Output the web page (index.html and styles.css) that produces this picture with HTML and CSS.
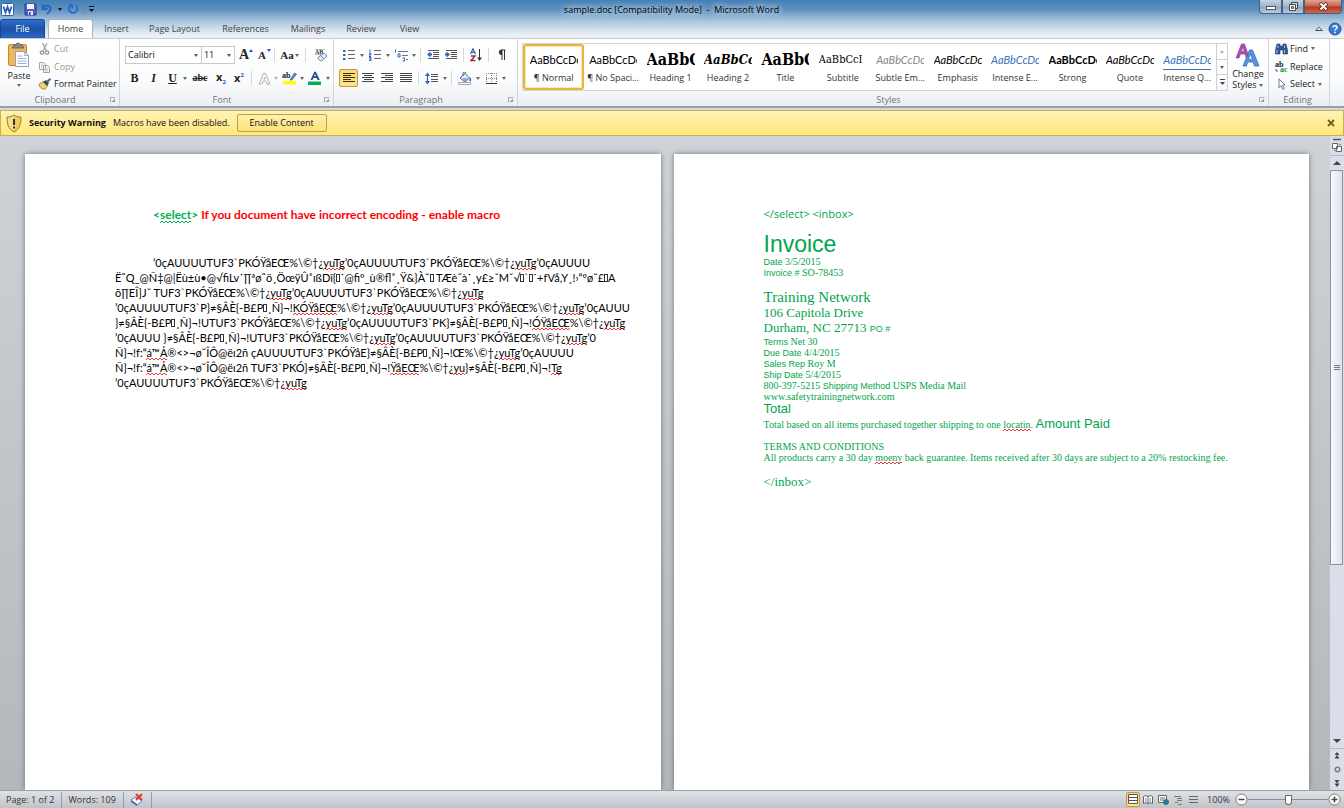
FILE: index.html
```html
<!DOCTYPE html>
<html lang="en">
<head>
<meta charset="utf-8">
<title>sample.doc [Compatibility Mode] - Microsoft Word</title>
<link rel="stylesheet" href="styles.css">
</head>
<body>
<header class="frame">
  <div class="titlebar">
    <div class="quick">
      <svg width="14" height="14" viewBox="0 0 14 14"><rect x=".5" y="1.500" width="12" height="12" rx="1" fill="#fff" stroke="#2b63a8"/><path d="M2.500 4.500l2 6 2-5.500 2 5.500 2-6" fill="none" stroke="#2560b4" stroke-width="1.800"/></svg>
      <i class="qsep"></i>
      <button aria-label="Save"><svg width="13" height="13" viewBox="0 0 13 13"><path d="M1 1h10l1 1v10H1z" fill="#5a5ec4" stroke="#303590"/><path d="M3 1h7v5H3z" fill="#f4f6ff"/><path d="M4 8h5v4H4z" fill="#dfe2f4"/><path d="M5 9h1.500v3H5z" fill="#30358f"/></svg></button>
      <button aria-label="Undo"><svg width="12" height="12" viewBox="0 0 12 12"><path d="M1.500 1v5h5" fill="none" stroke="#2a62c6" stroke-width="1.800"/><path d="M2 5.500C4 1.500 10 2 9.500 6c-.3 2-1.500 3.500-3.500 5" fill="none" stroke="#2a62c6" stroke-width="2"/></svg></button>
      <i class="caret dark"></i>
      <button aria-label="Repeat"><svg width="12" height="12" viewBox="0 0 12 12"><path d="M9 2.500A4.200 4.200 0 1 1 3 3" fill="none" stroke="#2a6ad0" stroke-width="2"/><path d="M1 1h5v5z" fill="#2a6ad0"/></svg></button>
      <i class="qsep"></i>
      <button aria-label="Customize"><svg width="7" height="8" viewBox="0 0 7 8"><path d="M1 1.500h5" stroke="#111"/><path d="M1 4h5L3.500 7z" fill="#111"/></svg></button>
    </div>
    <h1 class="title">sample.doc [Compatibility Mode]&nbsp; -&nbsp; Microsoft Word</h1>
    <div class="winbtns">
      <button aria-label="Minimize"><svg width="12" height="8" viewBox="0 0 12 8"><rect x="1.500" y="3.500" width="9" height="3" fill="#fff" stroke="#555"/></svg></button>
      <button aria-label="Restore"><svg width="11" height="11" viewBox="0 0 11 11"><path d="M3.500 1.500h6v6h-6z" fill="#ddd" stroke="#444"/><path d="M1.500 3.500h6v6h-6z" fill="#fff" stroke="#444"/><path d="M3.500 5.500h2v2h-2z" fill="#aaa" stroke="#444" stroke-width=".8"/></svg></button>
      <button class="close" aria-label="Close"><svg width="11" height="9" viewBox="0 0 11 9"><path d="M2 1l7 7M9 1L2 8" stroke="#5a2a26" stroke-width="3.400"/><path d="M2.500 1.500l6 6M8.500 1.500l-6 6" stroke="#fff" stroke-width="2"/></svg></button>
    </div>
  </div>
  <nav class="tabs">
    <button class="file">File</button>
    <button class="tab active">Home</button>
    <button class="tab">Insert</button>
    <button class="tab w-l">Page Layout</button>
    <button class="tab w-l">References</button>
    <button class="tab w-m">Mailings</button>
    <button class="tab w-s">Review</button>
    <button class="tab">View</button>
    <span class="grow"></span>
    <button class="mini" aria-label="Minimize the Ribbon"><svg width="8" height="6" viewBox="0 0 8 6"><path d="M.8 4.500L4 1.200l3.200 3.300z" fill="#fff" stroke="#444"/></svg></button>
    <button class="mini" aria-label="Help"><svg width="14" height="14" viewBox="0 0 14 14"><circle cx="7" cy="7" r="6" fill="#3a78d0" stroke="#2556a4"/><path d="M5 5.500c0-2.500 4-2.500 4 0 0 1.500-2 1.500-2 3M7 9.800v1.500" fill="none" stroke="#fff" stroke-width="1.500"/></svg></button>
  </nav>
</header>

<section class="ribbon">
  <div class="group clip">
    <div class="body clipbody">
      <button class="paste"><svg width="24" height="26" viewBox="0 0 24 26"><rect x="1.500" y="2.500" width="18" height="21" rx="1.500" fill="#f0b858" stroke="#c8872e"/><path d="M5 6l2-3h2a2 2 0 0 1 4 0h2l2 3z" fill="#8d8d8d" stroke="#555" stroke-width=".8"/><path d="M8.500 9.500h9l4 4v11h-13z" fill="#fff" stroke="#8ea2c0"/><path d="M17.500 9.500v4h4M10.500 14h5M10.500 16.500h9M10.500 19h9M10.500 21.500h9" fill="none" stroke="#9db2d2"/></svg><span>Paste</span><i class="caret"></i></button>
      <div class="cliplist">
        <button class="off"><svg width="14" height="12" viewBox="0 0 14 12"><path d="M4.500 0l4 8M9 0L5 8" stroke="#a5a5a5" stroke-width="1.300"/><circle cx="4" cy="9.500" r="1.700" fill="none" stroke="#999" stroke-width="1.300"/><circle cx="9" cy="9.500" r="1.700" fill="none" stroke="#999" stroke-width="1.300"/></svg>Cut</button>
        <button class="off"><svg width="14" height="12" viewBox="0 0 14 12"><path d="M1.500 1.500h4l2 2v5h-6zM5.500 4.500h4l2 2v5h-6z" fill="#f3f3f3" stroke="#a5a5a5"/><path d="M7 8h3M7 9.700h3M3 4h2M3 6h2" stroke="#bbb" stroke-width=".8"/></svg>Copy</button>
        <button><svg width="14" height="12" viewBox="0 0 14 12"><path d="M1 6l5-3 4 4-3 4.500-2-1-1 .5-1-2-1.500-.5z" fill="#f0d070" stroke="#96731c" stroke-width=".7"/><path d="M5 4l3-2 3 3-2 3z" fill="#454545"/><path d="M9 4l3.500-3.300" stroke="#4a67b4" stroke-width="2"/></svg>Format Painter</button>
      </div>
    </div>
    <footer class="glabel"><span>Clipboard</span><i class="launch"></i></footer>
  </div>

  <div class="group font">
    <div class="body rows">
      <div class="row">
        <span class="combo wide"><select aria-label="Font"><option>Calibri</option></select></span><span class="combo"><select aria-label="Font size"><option>11</option></select></span>
        <button class="ib s18" aria-label="Grow font"><span class="ser b14">A</span><i class="up"></i></button>
        <button class="ib s18" aria-label="Shrink font"><span class="ser b11">A</span><i class="down"></i></button>
        <i class="sep"></i>
        <button class="ib s24" aria-label="Change case"><span class="aa">Aa</span><i class="caret"></i></button>
        <i class="sep"></i>
        <button class="ib s24" aria-label="Clear formatting"><svg width="14" height="14" viewBox="0 0 14 14"><text x="1" y="6" class="t7">AB</text><path d="M1 1.500h10M1 6.500h6" stroke="#888" stroke-width=".6"/><path d="M4 9.500l6-4.500 3 3-5 4.500c-2 1-4-1.500-4-3z" fill="#e8edf8" stroke="#6f86b8"/><path d="M6.500 7.500l3 3" stroke="#6f86b8"/></svg></button>
      </div>
      <div class="row">
        <button class="ib s19"><b class="ser b12">B</b></button>
        <button class="ib s19"><i class="ser b12 ital">I</i></button>
        <button class="ib s19"><u class="ser b12">U</u></button>
        <i class="caret"></i>
        <button class="ib s24"><s class="ser strike">abc</s></button>
        <button class="ib s18"><span class="xx">x<sub>2</sub></span></button>
        <button class="ib s18"><span class="xx">x<sup>2</sup></span></button>
        <i class="sep"></i>
        <button class="ib s18" aria-label="Text effects"><svg width="13" height="13" viewBox="0 0 13 13"><path d="M1 12L5.500 1.500h2L12 12H9L8 9H5l-1 3zM5.800 7h1.400L6.500 5z" fill="#f8f8f8" stroke="#b4b4b4"/></svg></button><i class="caret dim"></i>
        <button class="ib s20" aria-label="Highlight"><svg width="15" height="14" viewBox="0 0 15 14"><text x="0" y="7" class="t8">ab</text><path d="M8 9l4.500-7 2 1L10 9z" fill="#5f86c8" stroke="#2c4b80" stroke-width=".6"/><path d="M1 10h13v3.500H1z" fill="#ff0"/></svg></button><i class="caret"></i>
        <button class="ib s20" aria-label="Font color"><svg width="14" height="14" viewBox="0 0 14 14"><path d="M2.500 9L6.300.8h1.600L11.800 9H9.500L8.700 7H5.400l-.8 2zM6 5.300h2L7 3z" fill="#294f94"/><path d="M0 10.500h13V14H0z" fill="#00b050"/></svg></button><i class="caret"></i>
      </div>
    </div>
    <footer class="glabel"><span>Font</span><i class="launch"></i></footer>
  </div>

  <div class="group para">
    <div class="body rows">
      <div class="row">
        <button class="ib s20" aria-label="Bullets"><svg width="13" height="12" viewBox="0 0 13 12"><path d="M0 1h2.500v2H0zM0 5h2.500v2H0zM0 9h2.500v2H0z" fill="#3a62b4"/><path d="M5 1.500h7M5 5.500h7M5 9.500h7" stroke="#666"/></svg></button><i class="caret"></i>
        <button class="ib s20" aria-label="Numbering"><svg width="13" height="12" viewBox="0 0 13 12"><path d="M1 .5v3M0 4.500h2v1.500H0v1.500h2M0 8.500h2v3H0M0 10h2" fill="none" stroke="#3a62b4"/><path d="M5 1.500h7M5 5.500h7M5 9.500h7" stroke="#666"/></svg></button><i class="caret"></i>
        <button class="ib s20" aria-label="Multilevel list"><svg width="15" height="13" viewBox="0 0 15 13"><path d="M1.500 .5v3M4 5h2v3H4zM8.500 9h2v3h-2" fill="none" stroke="#3a62b4"/><path d="M4 2.500h10M8 6.500h6M12 10.500h2" stroke="#777"/></svg></button><i class="caret"></i>
        <i class="sep"></i>
        <button class="ib s18" aria-label="Decrease indent"><svg width="13" height="12" viewBox="0 0 13 12"><path d="M1 1.500h11M6 3.500h6M6 5.500h6M6 7.500h6M1 9.500h11" stroke="#555"/><path d="M0 5.500l3.500-3v2H5v2H3.500v2z" fill="#2f62c0"/></svg></button>
        <button class="ib s18" aria-label="Increase indent"><svg width="13" height="12" viewBox="0 0 13 12"><path d="M1 1.500h11M6 3.500h6M6 5.500h6M6 7.500h6M1 9.500h11" stroke="#555"/><path d="M5 5.500l-3.500-3v2H0v2h1.500v2z" fill="#2f62c0"/></svg></button>
        <i class="sep"></i>
        <button class="ib s18" aria-label="Sort"><svg width="13" height="14" viewBox="0 0 13 14"><path d="M.5 6L3 .8 5.500 6M1.500 4.300h3" fill="none" stroke="#2f62c0" stroke-width="1.200"/><path d="M1 8h4L1 12.500h4.500" fill="none" stroke="#a02c2c" stroke-width="1.400"/><path d="M9.500 1v11" stroke="#333"/><path d="M7 9.500h5L9.500 13z" fill="#333"/></svg></button>
        <i class="sep"></i>
        <button class="ib s18" aria-label="Show paragraph marks"><svg width="9" height="12" viewBox="0 0 9 12"><path d="M5 11V1.500M7.500 11V1M8.500 1H4" stroke="#333" fill="none"/><path d="M4.500 1v4.500a2.200 2.200 0 0 1 0-4.500z" fill="#333" stroke="#333"/></svg></button>
      </div>
      <div class="row">
        <button class="ib s19 on" aria-label="Align left"><svg width="12" height="12" viewBox="0 0 12 12"><path d="M0 1.500h12M0 3.500h8M0 5.500h12M0 7.500h8M0 9.500h12" stroke="#3b3010"/></svg></button>
        <button class="ib s19" aria-label="Center"><svg width="12" height="12" viewBox="0 0 12 12"><path d="M0 1.500h12M2 3.500h8M0 5.500h12M2 7.500h8M0 9.500h12" stroke="#444"/></svg></button>
        <button class="ib s19" aria-label="Align right"><svg width="12" height="12" viewBox="0 0 12 12"><path d="M0 1.500h12M4 3.500h8M0 5.500h12M4 7.500h8M0 9.500h12" stroke="#444"/></svg></button>
        <button class="ib s19" aria-label="Justify"><svg width="12" height="12" viewBox="0 0 12 12"><path d="M0 1.500h12M0 3.500h12M0 5.500h12M0 7.500h12M0 9.500h12" stroke="#444"/></svg></button>
        <i class="sep"></i>
        <button class="ib s20" aria-label="Line spacing"><svg width="14" height="13" viewBox="0 0 14 13"><path d="M2.500 2v9" stroke="#2f62c0" stroke-width="1.200"/><path d="M0 4l2.500-3.500L5 4zM0 9l2.500 3.500L5 9z" fill="#2f62c0"/><path d="M6 2.500h7M6 4.500h7M6 7.500h7M6 9.500h7" stroke="#555"/></svg></button><i class="caret"></i>
        <i class="sep"></i>
        <button class="ib s20" aria-label="Shading"><svg width="14" height="13" viewBox="0 0 14 13"><path d="M2 6l5-4.500L11.500 6 7 10z" fill="#e8eefa" stroke="#4b669c"/><path d="M4 6h7l-4 4z" fill="#8fa9da"/><path d="M5 4V1.500a1.500 1.500 0 0 1 3 0" fill="none" stroke="#555"/><path d="M12 5c1.500 2 1.500 4 .5 4.500S11 8 12 5z" fill="#2f62c0"/><path d="M.5 10.500h12v2H.5z" fill="#fff" stroke="#aaa"/></svg></button><i class="caret"></i>
        <button class="ib s20" aria-label="Borders"><svg width="13" height="13" viewBox="0 0 13 13"><path d="M1 1.500h11M1.500 1v10M6.500 1v10M11.500 1v10M1 6.500h11" stroke="#888" stroke-dasharray="1 1"/><path d="M1 11.500h11" stroke="#333"/></svg></button><i class="caret"></i>
      </div>
    </div>
    <footer class="glabel"><span>Paragraph</span><i class="launch"></i></footer>
  </div>

  <div class="group styles">
    <div class="body stylebody">
      <div class="gallery">
        <button class="style sel"><span class="smp">AaBbCcDc</span><span>¶ Normal</span></button>
        <button class="style"><span class="smp">AaBbCcDc</span><span>¶ No Spaci...</span></button>
        <button class="style"><span class="smp h1">AaBbC</span><span>Heading 1</span></button>
        <button class="style"><span class="smp h2">AaBbCc</span><span>Heading 2</span></button>
        <button class="style"><span class="smp h1">AaBbC</span><span>Title</span></button>
        <button class="style"><span class="smp sub">AaBbCcI</span><span>Subtitle</span></button>
        <button class="style"><span class="smp it grey">AaBbCcDc</span><span>Subtle Em...</span></button>
        <button class="style"><span class="smp it">AaBbCcDc</span><span>Emphasis</span></button>
        <button class="style"><span class="smp it blue">AaBbCcDc</span><span>Intense E...</span></button>
        <button class="style"><span class="smp bold">AaBbCcDc</span><span>Strong</span></button>
        <button class="style"><span class="smp it">AaBbCcDc</span><span>Quote</span></button>
        <button class="style"><span class="smp it blue line">AaBbCcDc</span><span>Intense Q...</span></button>
      </div>
      <div class="galnav">
        <button aria-label="Previous styles"><i class="caret flip dim"></i></button>
        <button aria-label="Next styles"><i class="caret"></i></button>
        <button aria-label="More styles"><svg width="7" height="7" viewBox="0 0 7 7"><path d="M1 .5h5" stroke="#444"/><path d="M1 3h5L3.500 6z" fill="#444"/></svg></button>
      </div>
      <button class="change"><svg width="26" height="25" viewBox="0 0 26 25"><path d="M1 15L6.500 1h3L14 14l-3 .5L10 11H5.500L4 15zM6.300 8.500h3L8 4z" fill="#b44ab8" stroke="#80308c" stroke-width=".6"/><path d="M8 23L14.500 7h3L24 23h-4.500L18 19h-5.500L11.500 23zM13.500 16.200h4L15.500 11z" fill="#5a94e0" stroke="#2c5fae" stroke-width=".7"/></svg><span>Change</span><span class="with-caret">Styles <i class="caret"></i></span></button>
    </div>
    <footer class="glabel"><span>Styles</span><i class="launch"></i></footer>
  </div>

  <div class="group edit">
    <div class="body cliplist">
      <button><svg width="13" height="12" viewBox="0 0 13 12"><path d="M2 1h3v2h3V1h3l1.500 6v4H8V7H5v4H.5V7z" fill="#2f569c" stroke="#1c3566" stroke-width=".6"/><path d="M2 7v3M9.500 7v3M3 2.500V5M9.500 2.500V5" stroke="#a8c2ee"/></svg>Find <i class="caret"></i></button>
      <button><svg width="13" height="12" viewBox="0 0 13 12"><text x="0" y="6" class="t8">ab</text><text x="5" y="11" class="t8 green">ac</text><path d="M1 8v2h2" fill="none" stroke="#2f62c0"/></svg>Replace</button>
      <button><svg width="13" height="12" viewBox="0 0 13 12"><path d="M4 .8v9l2-2 2 3.500 1.300-.8-1.800-3.300L10 7z" fill="#fff" stroke="#5a6f96" stroke-width=".9"/></svg>Select <i class="caret"></i></button>
    </div>
    <footer class="glabel"><span>Editing</span></footer>
  </div>
</section>

<section class="warn" role="alert">
  <svg width="16" height="19" viewBox="0 0 16 19"><path d="M8 1c2 1.500 4.500 2 7 2 0 7-1 11.500-7 15C2 14.500 1 10 1 3c2.500 0 5-.5 7-2z" fill="#f5c95c" stroke="#9c8238"/><path d="M8 2v15c-5-3-6-7-6-13 2 0 4-.5 6-2z" fill="#fbe08c"/><path d="M8 5v6M8 12.500v2" stroke="#333" stroke-width="2"/></svg>
  <strong>Security Warning</strong>
  <span>Macros have been disabled.</span>
  <button class="enable">Enable Content</button>
  <span class="grow"></span>
  <button class="wx" aria-label="Close message"><svg width="8" height="8" viewBox="0 0 8 8"><path d="M1 1l6 6M7 1L1 7" stroke="#6f6218" stroke-width="1.800"/></svg></button>
</section>

<main class="work">
  <div class="pages">
    <article class="page left">
      <p class="lead"><span class="green"><span>&lt;</span><span class="sq g">select</span>&gt;</span> If you document have incorrect encoding - enable macro</p>
      <div class="junk">
        <p class="ind">’0çAUUUUTUF3`PKÓŸåEŒ%\©†¿<span class="sq">yuTg</span>’0çAUUUUTUF3`PKÓŸåEŒ%\©†¿<span class="sq">yuTg</span>’0çAUUUU</p>
        <p>Ë˜Q_@Ñ‡@|Ëù±ù•@√ﬁLv˙∏ªø˜ö¸ÖœÿÛ˚ıßDî{<i class="bx"></i>˙@ﬁº_ù®ﬂ˚¸Ÿ&amp;}À˘<i class="bx"></i> TÆè˝à˙¸y£≥ˇMˇ√<i class="bx"></i>`<i class="bx"></i>˙+fVå,Y¸!›“ºø˘£<i class="bx"></i>A</p>
        <p>õ∏EÎ]Jˇ TUF3`PKÓŸåEŒ%\©†¿<span class="sq">yuTg</span>’0çAUUUUTUF3`PKÓŸåEŒ%\©†¿<span class="sq">yuTg</span></p>
        <p>’0çAUUUUTUF3`P}≠§ÂÈ{-B£P<i class="bx"></i>¸Ñ}¬!<span class="sq">KÓŸåEŒ</span>%\©†¿<span class="sq">yuTg</span>’0çAUUUUTUF3`PKÓŸåEŒ%\©†¿<span class="sq">yuTg</span>’0çAUUU</p>
        <p>}≠§ÂÈ{-B£P<i class="bx"></i>¸Ñ}¬!UTUF3`PKÓŸåEŒ%\©†¿<span class="sq">yuTg</span>’0çAUUUUTUF3`PK}≠§ÂÈ{-B£P<i class="bx"></i>¸Ñ}¬!<span class="sq">ÓŸåEŒ</span>%\©†¿<span class="sq">yuTg</span></p>
        <p>’0çAUUU }≠§ÂÈ{-B£P<i class="bx"></i>¸Ñ}¬!UTUF3`PKÓŸåEŒ%\©†¿<span class="sq">yuTg</span>’0çAUUUUTUF3`PKÓŸåEŒ%\©†¿<span class="sq">yuTg</span>’0</p>
        <p>Ñ}¬!f:“<span class="sq">á™Å</span>®&lt;&gt;¬ø˘ÎÔ@ëı2ñ çAUUUUTUF3`PKÓŸåE}≠§ÂÈ{-B£P<i class="bx"></i>¸Ñ}¬!Œ%\©†¿<span class="sq">yuTg</span>’0çAUUUU</p>
        <p>Ñ}¬!f:“<span class="sq">á™Å</span>®&lt;&gt;¬ø˘ÎÔ@ëı2ñ TUF3`PKÓ}≠§ÂÈ{-B£P<i class="bx"></i>¸Ñ}¬!<span class="sq">ŸåEŒ</span>%\©†¿<span class="sq">yu</span>}≠§ÂÈ{-B£P<i class="bx"></i>¸Ñ}¬!<span class="sq">Tg</span></p>
        <p>’0çAUUUUTUF3`PKÓŸåEŒ%\©†¿<span class="sq">yuTg</span></p>
      </div>
    </article>
    <article class="page right">
      <p class="tag">&lt;/select&gt; &lt;inbox&gt;</p>
      <h2>Invoice</h2>
      <p><span class="a">Date</span> 3/5/2015</p>
      <p><span class="a">Invoice #</span> SO-78453</p>
      <div class="addr"><p class="name">Training Network</p><p>106 Capitola Drive</p><p>Durham, NC 27713 <span class="a">PO #</span></p></div>
      <p><span class="a">Terms</span> Net 30</p>
      <p><span class="a">Due Date</span> 4/4/2015</p>
      <p><span class="a">Sales Rep</span> Roy M</p>
      <p><span class="a">Ship Date</span> 5/4/2015</p>
      <p>800-397-5215 <span class="a">Shipping Method</span> USPS Media Mail</p>
      <p>www.safetytrainingnetwork.com</p>
      <p class="tot"><span class="big">Total</span></p>
      <p class="tot">Total based on all items purchased together shipping to one <span class="sq">locatin</span>. <span class="big">Amount Paid</span></p>
      <div class="terms"><p>TERMS AND CONDITIONS</p><p>All products carry a 30 day <span class="sq">moeny</span> back guarantee. Items received after 30 days are subject to a 20% restocking fee.</p></div>
      <p class="end">&lt;/inbox&gt;</p>
    </article>
  </div>
  <aside class="scroll">
    <button class="ruler" aria-label="View ruler"><svg width="12" height="16" viewBox="0 0 12 16"><path d="M2 1.500h8" stroke="#555" stroke-width="1.500"/><path d="M1.500 5.500h5v5h-5zM5.500 8.500h5v5h-5z" fill="#fff" stroke="#666"/><path d="M8 6l2 1M3 12l2 1" stroke="#666"/></svg></button>
    <button class="sb" aria-label="Scroll up"><i class="tri flip"></i></button>
    <div class="track"><div class="thumb"><i></i><i></i><i></i></div></div>
    <button class="sb" aria-label="Scroll down"><i class="tri"></i></button>
    <button class="sb nav" aria-label="Previous page"><svg width="6" height="7" viewBox="0 0 6 7"><path d="M3 0l2.500 3h-5zM3 3l2.500 3.500h-5z" fill="#444"/></svg></button>
    <button class="sb" aria-label="Select browse object"><svg width="7" height="7" viewBox="0 0 7 7"><circle cx="3.500" cy="3.500" r="2.500" fill="#ccc" stroke="#555"/></svg></button>
    <button class="sb" aria-label="Next page"><svg width="6" height="7" viewBox="0 0 6 7"><path d="M.5 0h5L3 3.500zM.5 3.500h5L3 7z" fill="#444"/></svg></button>
  </aside>
</main>

<footer class="status">
  <span class="cell">Page: 1 of 2</span>
  <span class="cell">Words: 109</span>
  <button class="cell" aria-label="Proofing errors"><svg width="14" height="13" viewBox="0 0 14 13"><path d="M1 7l5-3 6 4-5 4z" fill="#fff" stroke="#5a7cc0"/><path d="M1 7v2l6 4v-2z" fill="#3c66b8"/><path d="M6 1l6 6M12 1L6 7" stroke="#e03a22" stroke-width="2"/></svg></button>
  <span class="grow"></span>
  <div class="views">
    <button class="ib on" aria-label="Print Layout"><svg width="10" height="11" viewBox="0 0 10 11"><path d="M.5 .5h9v9h-9zM.5 3.500h9M.5 6.500h9" fill="#fff" stroke="#555"/></svg></button>
    <button class="ib" aria-label="Full Screen Reading"><svg width="10" height="10" viewBox="0 0 10 10"><path d="M.5 1.500c1.500-1 3-1 4.500 0 1.500-1 3-1 4.500 0v7c-1.500-1-3-1-4.500 0-1.500-1-3-1-4.500 0zM5 1.500v7M2 4h1.500M2 6h1.500M6.500 4H8M6.500 6H8" fill="#fff" stroke="#555" stroke-width=".9"/></svg></button>
    <button class="ib" aria-label="Web Layout"><svg width="11" height="10" viewBox="0 0 11 10"><path d="M.5 .5h8v7h-8zM2 3h5M2 5h4" fill="#fff" stroke="#666"/><circle cx="8" cy="7" r="2.500" fill="#2f78b8" stroke="#236040" stroke-width=".8"/></svg></button>
    <button class="ib" aria-label="Outline"><svg width="9" height="10" viewBox="0 0 9 10"><path d="M0 1.500h7M3 3.500h5M3 5.500h5M1 7.500h3M4 9.500h4" stroke="#777"/></svg></button>
    <button class="ib" aria-label="Draft"><svg width="9" height="9" viewBox="0 0 9 9"><path d="M0 1.500h9M0 4.500h9M0 7.500h9" stroke="#666"/></svg></button>
  </div>
  <span class="pct">100%</span>
  <button class="zoom" aria-label="Zoom out"><svg width="13" height="13" viewBox="0 0 13 13"><circle cx="6.500" cy="6.500" r="5.500" fill="#fff" stroke="#777"/><path d="M3.500 6.500h6" stroke="#444" stroke-width="1.500"/></svg></button>
  <input class="slider" type="range" aria-label="Zoom" value="50">
  <button class="zoom" aria-label="Zoom in"><svg width="13" height="13" viewBox="0 0 13 13"><circle cx="6.500" cy="6.500" r="5.500" fill="#fff" stroke="#777"/><path d="M3.500 6.500h6M6.500 3.500v6" stroke="#444" stroke-width="1.500"/></svg></button>
</footer>
</body>
</html>
```
FILE: styles.css
```css
* { box-sizing: border-box; }
body {
  margin: 0;
  min-height: 100vh;
  display: flex;
  flex-direction: column;
  font: 9px/12px "Open Sans", "Noto Sans", sans-serif;
  color: #222;
}
button, select { font: inherit; color: inherit; border: 0; background: none; padding: 0; margin: 0; white-space: nowrap; }
p, h1, h2 { margin: 0; font-weight: normal; }
svg { display: block; flex: none; }
.grow { flex: 1; }
.caret { flex: none; display: inline-block; border: 2px solid transparent; border-top: 3px solid #666; border-bottom: 0; width: 4px; height: 3px; margin: 0 1px; }
.caret.dark { border-top-color: #111; }
.flip { transform: rotate(180deg); }
.dim { opacity: 0.5; }

/* Window frame */
.frame { background: linear-gradient(#4280b5, #5c91be 25%, #a9c5de 55%, #e9eef4 90%, #eef2f6); border-bottom: 1px solid #c9cdd2; }
.titlebar { display: flex; align-items: flex-start; justify-content: space-between; height: 19px; }
.quick { flex: 1; display: flex; align-items: center; gap: 4px; height: 18px; padding-left: 1px; }
.qsep { width: 1px; height: 12px; background: #6d8aa6; }
.title { font-size: 9px; line-height: 19px; color: #000; text-shadow: 0 0 6px #e8f2fb, 0 0 8px #dceaf8; }
.winbtns { flex: 1; display: flex; justify-content: flex-end; padding-right: 2px; }
.winbtns button { width: 22px; height: 14px; display: grid; place-items: center; border: 1px solid #46617e; border-top: 0; background: linear-gradient(#c3d3e2, #9fb5ca 50%, #8aa4be 51%, #b6cbdd); }
.winbtns button:first-child { width: 23px; border-radius: 0 0 0 4px; }
.winbtns .close { width: 38px; border-radius: 0 0 4px 0; background: linear-gradient(#dfa493, #c9604c 48%, #b23320 52%, #cf6a4b); }
.tabs { display: flex; height: 19px; padding-right: 2px; align-items: stretch; color: #444; }
.file { width: 45px; background: linear-gradient(#2e6fc8, #1d52a8 50%, #2a69c4); border: 1px solid #1b4890; border-bottom: 0; border-radius: 3px 3px 0 0; color: #fff; }
.tab { width: 45px; text-align: center; }
.tab.active { background: #fff; border: 1px solid #aab4c0; border-bottom: 0; border-radius: 3px 3px 0 0; margin: 0 1px 0 3px; }
.tab.w-l { width: 71px; }
.tab.w-m { width: 54px; }
.tab.w-s { width: 52px; }
.mini { margin-left: 5px; display: grid; place-items: center; }

/* Ribbon */
.ribbon { display: flex; background: linear-gradient(#fff, #fbfcfd 60%, #eceff2); border-bottom: 2px solid #9a9fa8; box-shadow: 0 2px #d4d8dd; margin-bottom: 2px; }
.group { display: flex; flex-direction: column; border-right: 1px solid #d2d6db; }
.body { height: 54px; }
.glabel { display: flex; height: 13px; line-height: 13px; text-align: center; color: #6a7484; padding-right: 3px; }
.glabel span { flex: 1; }
.launch { width: 6px; height: 6px; margin-top: 4px; border: 1px solid #a8afb9; border-right-color: transparent; border-bottom-color: transparent; background: linear-gradient(135deg, transparent 55%, #98a0ac 55%); }
.clip { width: 120px; }
.clipbody { display: flex; }
.paste { width: 38px; display: flex; flex-direction: column; align-items: center; gap: 2px; padding-top: 3px; }
.cliplist { display: flex; flex-direction: column; padding-top: 1px; }
.cliplist button { display: flex; align-items: center; gap: 2px; height: 18px; }
.cliplist .off { color: #9a9a9a; }
.font { width: 214px; }
.rows { padding: 6px 0 0 5px; display: flex; flex-direction: column; gap: 3px; }
.row { display: flex; align-items: center; height: 20px; }
.combo { position: relative; width: 35px; height: 18px; border: 1px solid #c6cad0; background: #fff; display: flex; }
.combo.wide { width: 79px; margin-right: -1px; }
.combo select { appearance: none; width: 100%; padding-left: 2px; line-height: 14px; color: #111; }
.combo::after { content: ""; position: absolute; right: 3px; top: 7px; border: 2px solid transparent; border-top: 3px solid #555; border-bottom: 0; }
.ib { flex: none; display: flex; align-items: center; justify-content: center; height: 18px; position: relative; }
.s18 { width: 18px; }
.s19 { width: 19px; }
.s20 { width: 20px; }
.s24 { width: 24px; }
.sep { flex: none; width: 1px; height: 14px; margin: 0 3px; background: #d5d9de; }
.ser { font-family: "Liberation Serif", serif; font-weight: bold; color: #222; }
.b14 { font-size: 14px; }
.b12 { font-size: 12px; }
.b11 { font-size: 11px; }
.ital { font-style: italic; }
.strike { font-size: 10px; }
.up, .down { position: absolute; right: 0; top: 3px; border: 2px solid transparent; border-bottom: 3px solid #2c58a8; border-top: 0; }
.down { transform: rotate(180deg); }
.aa { font: bold 11px "Liberation Serif", serif; }
.xx { font: bold 11px/12px "Open Sans", sans-serif; }
.xx sub, .xx sup { font-size: 6px; line-height: 6px; color: #2f62c0; }
.t7 { font: bold 6px "Liberation Serif", serif; fill: #333; }
.t8 { font: bold 8px "Liberation Serif", serif; fill: #222; }
.t8.green { fill: #1a9040; }
.on { background: linear-gradient(#fbd77a, #fde58c); border: 1px solid #c29a3a; border-radius: 2px; }
.para { width: 184px; }

/* Style gallery */
.styles { flex: 1; min-width: 0; }
.stylebody { display: flex; padding: 4px 0 0 4px; }
.gallery { flex: 1; min-width: 0; display: flex; height: 48px; background: #fff; border: 1px solid #d3d7dc; border-right: 0; }
.style { flex: 1; min-width: 0; display: flex; flex-direction: column; align-items: center; gap: 2px; padding-top: 6px; border: 0; color: #333; }
.style.sel { border: 2px solid #e8b53c; border-radius: 3px; padding-top: 4px; box-shadow: inset 0 0 0 1px #fdeaa8; }
.smp { width: 48px; height: 20px; overflow: hidden; text-align: left; font: 11px/20px Lato, sans-serif; color: #000; }
.smp.h1 { font: bold 16px/20px "DejaVu Serif Condensed", "DejaVu Serif", serif; }
.smp.h2 { font: italic bold 13px/20px "DejaVu Serif Condensed", "DejaVu Serif", serif; }
.smp.sub { font: 11px/20px "DejaVu Serif Condensed", "DejaVu Serif", serif; }
.smp.it { font-style: italic; }
.smp.bold { font-weight: bold; }
.smp.grey { color: #888; }
.smp.blue { color: #3a72b8; }
.smp.line { border-bottom: 1px solid #3a72b8; }
.galnav { width: 12px; height: 48px; display: flex; flex-direction: column; border: 1px solid #cdd1d7; }
.galnav button { flex: 1; display: grid; place-items: center; }
.galnav button + button { border-top: 1px solid #cdd1d7; }
.change { width: 40px; display: flex; flex-direction: column; align-items: center; line-height: 12px; }
.change span:last-child { line-height: 10px; }
.with-caret { display: flex; align-items: center; gap: 1px; }
.edit { width: 61px; margin-right: 14px; }
.edit .cliplist { padding-left: 6px; }

/* Message bar */
.warn { display: flex; align-items: center; gap: 7px; height: 26px; padding: 0 8px 0 5px; background: linear-gradient(#fff2b4, #ffe97e); border: 1px solid #c4b254; color: #111; }
.enable { width: 90px; height: 18px; border: 1px solid #b9a245; border-radius: 2px; background: linear-gradient(#fff0ac, #fde27a); }

/* Document area */
.work { flex: 1; display: flex; background: linear-gradient(#cfd2d6, #b4b7bb); }
.pages { flex: 1; display: flex; gap: 13px; padding: 18px 21px 0 25px; min-width: 0; }
.page { flex: 1; min-width: 0; background: #fff; box-shadow: 0 0 5px #6e7379; white-space: nowrap; overflow: hidden; }
.left { padding: 53px 0 0 90px; font: 11px/15px Lato, "Open Sans", sans-serif; color: #000; }
.lead { font-weight: bold; font-size: 12px; color: #f00; padding-left: 38px; margin-bottom: 33px; }
.green { color: #00b050; }
.ind { padding-left: 38px; }
.bx { display: inline-block; width: 4px; height: 8px; border: 1px solid #333; }
.sq { padding-bottom: 1px; background: url("data:image/svg+xml,%3Csvg xmlns='http://www.w3.org/2000/svg' width='4' height='2'%3E%3Cpath d='M0 2L2 0L4 2' fill='none' stroke='%23f33'/%3E%3C/svg%3E") repeat-x left bottom; }
.sq.g { background-image: url("data:image/svg+xml,%3Csvg xmlns='http://www.w3.org/2000/svg' width='4' height='2'%3E%3Cpath d='M0 2L2 0L4 2' fill='none' stroke='%2300b050'/%3E%3C/svg%3E"); }
.right { padding: 53px 0 0 90px; font: 10px/11px "Liberation Serif", serif; color: #00a64c; }
.tag { font: 11px/14px "Open Sans", sans-serif; }
.right h2 { font: 23px/24px "Liberation Sans", sans-serif; margin: 11px 0 0; }
.a { font: 9px/1px "Liberation Sans", sans-serif; }
.addr { font-size: 13px; line-height: 15px; margin: 12px 0 1px; }
.name { font-size: 15px; }
.big { font: 13px/1px "Liberation Sans", sans-serif; }
.tot { line-height: 15px; }
.terms { margin-top: 9px; }
.end { font-size: 13px; line-height: 14px; margin-top: 12px; }

.scroll { width: 14px; display: flex; flex-direction: column; background: #d9dee8; }
.scroll button { display: grid; place-items: center; }
.ruler { height: 20px; border-bottom: 1px solid #b4bac4; }
.sb { height: 14px; }
.nav { border-top: 1px solid #b4bac4; }
.tri { border: 4px solid transparent; border-top: 4px solid #444; border-bottom: 0; }
.track { flex: 1; }
.thumb { height: 70%; margin-right: 1px; border: 1px solid #8a93a2; background: linear-gradient(90deg, #f8f9fc, #dde2ec); display: flex; flex-direction: column; justify-content: center; align-items: center; gap: 1px; }
.thumb i { width: 6px; height: 1px; background: #777; }

/* Status bar */
.status { display: flex; align-items: center; height: 18px; padding-right: 3px; background: linear-gradient(#dfe2e6, #bfc3c8); border-top: 1px solid #9aa0a8; color: #333; }
.cell { padding: 0 7px 0 6px; border-right: 1px solid #959ba4; line-height: 16px; height: 16px; display: flex; align-items: center; }
.views { display: flex; gap: 1px; }
.views .ib { width: 14px; height: 15px; }
.pct { margin: 0 5px 0 7px; }
.slider { appearance: none; width: 80px; height: 13px; margin: 0; background: linear-gradient(#8b9098, #8b9098) center / 100% 1px no-repeat; }
.slider::-webkit-slider-thumb { appearance: none; width: 7px; height: 10px; background: #fff; border: 1px solid #666; border-radius: 1px 1px 4px 4px; }
```
